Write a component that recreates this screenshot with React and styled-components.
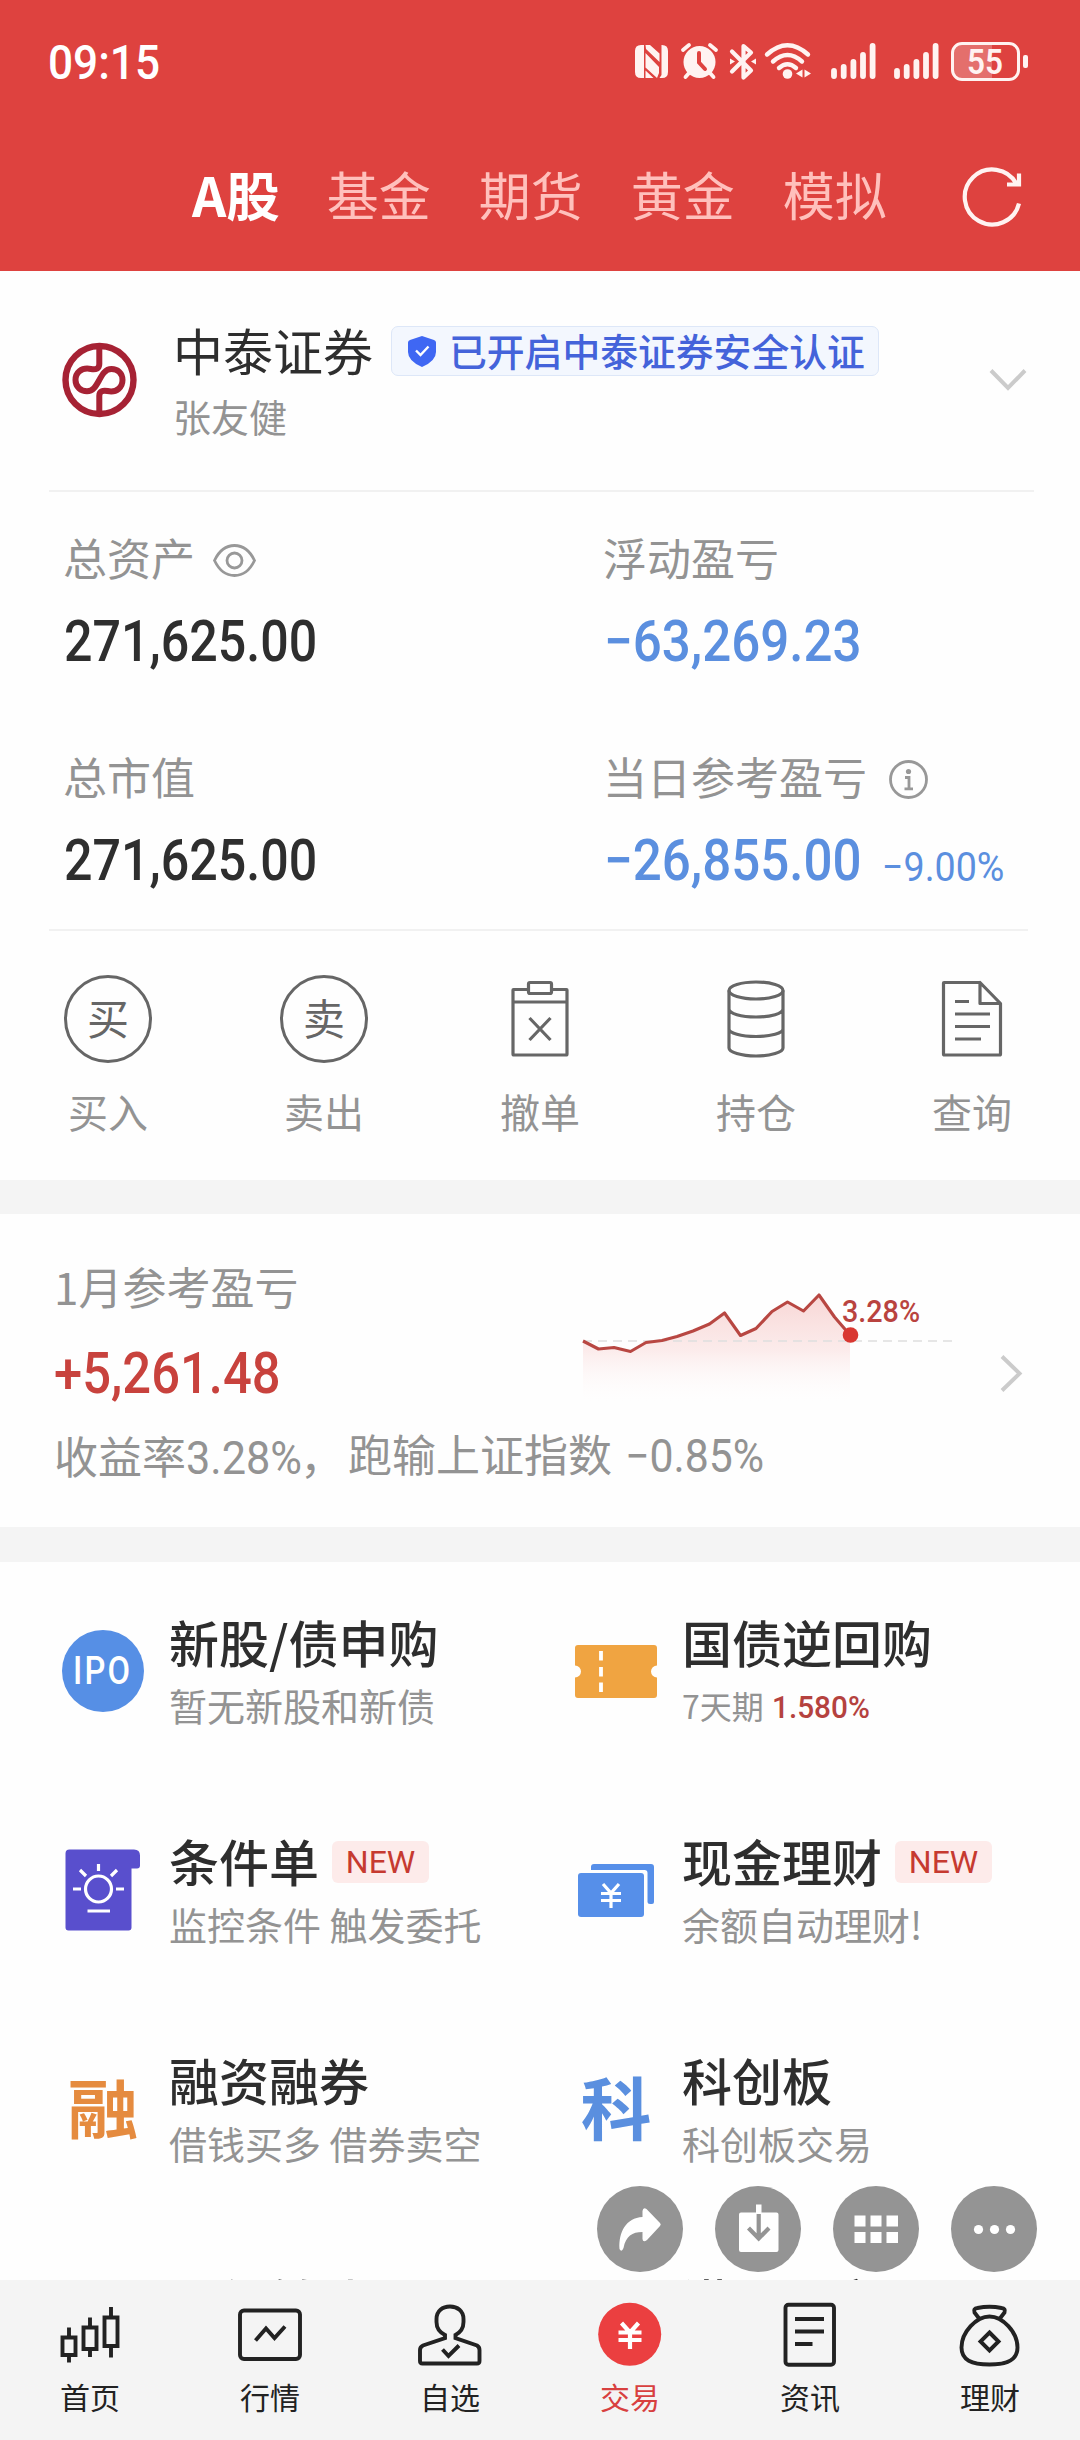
import React, { Fragment } from "react";
import styled, { createGlobalStyle } from "styled-components";

const Colors = {
  header: "#de423f",
  red: "#c8423d",
  blue: "#5b8fdf",
  text: "#2e2e2e",
  label: "#939393",
  icon: "#666666",
  line: "#f1f1f1",
  gap: "#f4f4f4",
};

const cjk = `"Noto Sans CJK SC", sans-serif`;
const latin = `Roboto, "Noto Sans CJK SC", sans-serif`;

const GlobalStyle = createGlobalStyle`
  * {
    box-sizing: border-box;
  }
  body {
    margin: 0;
    background-color: #fefefe;
    font-family: ${cjk};
  }
  svg {
    display: block;
    flex-shrink: 0;
    overflow: visible;
  }
`;

const Page = styled.div`
  position: relative;
  width: 1080px;
  height: 2440px;
  overflow: hidden;
  display: flex;
  flex-direction: column;
  background-color: #fefefe;
  white-space: nowrap;
`;

const Num = styled.span`
  display: inline-block;
  font-family: ${latin};
  font-size: ${(p) => p.$size}px;
  font-weight: ${(p) => p.$weight || 500};
  line-height: 1;
  color: ${(p) => p.$color || "inherit"};
  transform: scaleX(${(p) => p.$scale || 0.89});
  transform-origin: left center;
`;

/* ---------- header ---------- */

const Header = styled.header`
  height: 271px;
  flex-shrink: 0;
  background-color: ${Colors.header};
  color: #fff;
`;
const StatusBar = styled.div`
  height: 122px;
  padding: 0 52px 0 48px;
  display: flex;
  align-items: center;
  justify-content: space-between;
`;
const Clock = styled.div`
  padding-top: 3px;
  display: flex;
`;
const StatusIcons = styled.div`
  display: flex;
  align-items: center;
`;
const StatusIcon = styled.svg`
  margin-left: ${(p) => p.$gap || 0}px;
`;
const Battery = styled.div`
  width: 69px;
  height: 39px;
  margin-left: 12px;
  padding: 2px 0 0 3px;
  display: flex;
  align-items: center;
  justify-content: center;
  border: 3px solid #fff3f1;
  border-radius: 11px;
  background: linear-gradient(90deg, #e46f6c 60%, transparent 60%);
`;
const BatteryTip = styled.div`
  width: 5px;
  height: 13px;
  margin-left: 3px;
  border-radius: 2px;
  background-color: #fff3f1;
`;
const TabBar = styled.nav`
  height: 149px;
  padding: 0 58px 0 192px;
  display: flex;
  align-items: center;
`;
const Tab = styled.div`
  margin-right: ${(p) => (p.$active ? 47 : 48)}px;
  padding-bottom: 6px;
  font-size: ${(p) => (p.$active ? 53.5 : 52)}px;
  line-height: 60px;
  font-weight: ${(p) => (p.$active ? 700 : 400)};
  color: ${(p) => (p.$active ? "#fff" : "#ffc0bc")};
`;
const Refresh = styled.svg`
  margin-left: auto;
`;

/* ---------- account ---------- */

const Account = styled.section`
  height: 219px;
  flex-shrink: 0;
  padding: 55px 54px 0 62px;
  display: flex;
`;
const AccountLogo = styled.svg`
  margin-top: 17px;
`;
const AccountInfo = styled.div`
  margin-left: 37px;
  flex: 1;
`;
const AccountTitle = styled.div`
  height: 50px;
  display: flex;
  align-items: center;
`;
const BrokerName = styled.div`
  width: 218px;
  padding-bottom: 5px;
  font-size: 50px;
  line-height: 50px;
  color: ${Colors.text};
`;
const SafeBadge = styled.div`
  width: 488px;
  height: 50px;
  padding: 0 0 0 16px;
  display: flex;
  align-items: center;
  gap: 13px;
  border: 1px solid #dde7f8;
  border-radius: 7px;
  background-color: #f3f7fe;
  color: #4463da;
  font-size: 37.8px;
  font-weight: 500;
  line-height: 44px;
`;
const BadgeText = styled.span`
  padding-bottom: 2px;
`;
const UserName = styled.div`
  margin-top: 18px;
  font-size: 38px;
  line-height: 44px;
  color: ${Colors.label};
`;
const AccountArrow = styled.svg`
  margin-top: 42px;
`;
const Divider = styled.div`
  height: 2px;
  flex-shrink: 0;
  margin: 0 ${(p) => p.$right}px 0 49px;
  background-color: ${Colors.line};
`;

/* ---------- assets ---------- */

const Assets = styled.section`
  height: 437px;
  flex-shrink: 0;
  padding: 35px 0 0 63px;
  display: grid;
  grid-template-columns: 540px 1fr;
  grid-auto-rows: 145px;
  row-gap: 74px;
`;
const AssetLabel = styled.div`
  height: 60px;
  display: flex;
  align-items: center;
  font-size: 44px;
  line-height: 60px;
  color: ${Colors.label};
`;
const LabelIcon = styled.svg`
  margin: 6px 0 0 ${(p) => p.$gap}px;
`;
const AssetValue = styled.div`
  height: 60px;
  margin: 24px 0 0 1px;
  display: flex;
  align-items: center;
  color: ${(p) => (p.$down ? Colors.blue : Colors.text)};
`;
const AssetRate = styled.div`
  height: 40px;
  margin: 15px 0 0 -9px;
`;

/* ---------- actions ---------- */

const Actions = styled.section`
  height: 249px;
  flex-shrink: 0;
  padding-top: 44px;
  display: grid;
  grid-template-columns: repeat(5, 216px);
`;
const Action = styled.div`
  display: flex;
  flex-direction: column;
  align-items: center;
`;
const ActionCircle = styled.div`
  width: 88px;
  height: 88px;
  padding-bottom: 5px;
  display: flex;
  align-items: center;
  justify-content: center;
  border: 3px solid ${Colors.icon};
  border-radius: 50%;
  font-size: 42px;
  line-height: 42px;
  color: ${Colors.icon};
`;
const ActionLabel = styled.div`
  margin-top: 20px;
  font-size: 40px;
  line-height: 56px;
  color: ${Colors.label};
`;
const Gap = styled.div`
  height: ${(p) => p.$height}px;
  flex-shrink: 0;
  background-color: ${Colors.gap};
`;

/* ---------- month profit ---------- */

const Month = styled.section`
  height: 313px;
  flex-shrink: 0;
  padding: 44px 58px 0 54px;
  color: ${Colors.label};
`;
const MonthTop = styled.div`
  height: 145px;
  display: flex;
`;
const MonthText = styled.div`
  width: 529px;
`;
const MonthLabel = styled.div`
  font-size: 44px;
  line-height: 56px;
`;
const MonthValue = styled.div`
  height: 60px;
  margin-top: 29px;
  display: flex;
  align-items: center;
`;
const Chart = styled.svg`
  margin-top: -1px;
`;
const MonthArrow = styled.svg`
  margin: 97px 0 0 auto;
`;
const MonthSummary = styled.div`
  margin-top: 22px;
  display: flex;
  font-size: 44px;
  line-height: 56px;
`;
const SummaryPart = styled.div`
  width: ${(p) => p.$width}px;
  height: 56px;
  padding-top: ${(p) => p.$drop || 0}px;
  display: flex;
  align-items: center;
`;
const SummaryNum = styled.span`
  width: ${(p) => p.$width}px;
  margin-left: ${(p) => p.$gap || 0}px;
  padding-top: 5px;
  display: flex;
`;

/* ---------- features ---------- */

const Features = styled.section`
  height: 718px;
  flex-shrink: 0;
  overflow: hidden;
  display: grid;
  grid-template-columns: 513px 567px;
  grid-auto-rows: 219px;
`;
const Feature = styled.div`
  padding: ${(p) => (p.$last ? 53 : 51)}px 0 0 62px;
  display: flex;
  gap: 25px;
`;
const FeatureIcon = styled.div`
  width: 82px;
  height: 82px;
  margin-top: 17px;
  display: flex;
  align-items: center;
  justify-content: center;
`;
const IpoIcon = styled.div`
  width: 82px;
  height: 82px;
  padding-left: 8px;
  display: flex;
  align-items: center;
  justify-content: center;
  border-radius: 50%;
  background-color: #568fe5;
  color: #fff;
  letter-spacing: 2.5px;
`;
const WordIcon = styled.div`
  padding-bottom: 7px;
  font-size: 68px;
  line-height: 68px;
  font-weight: 700;
  color: ${(p) => p.$color};
  transform: scale(1.04, ${(p) => p.$scale || 1});
`;
const FeatureTitle = styled.div`
  height: 56px;
  display: flex;
  align-items: center;
  font-size: 50px;
  font-weight: 500;
  line-height: 56px;
  color: ${Colors.text};
`;
const NewTag = styled.div`
  width: 97px;
  height: 42px;
  margin: 3px 0 0 13px;
  display: flex;
  align-items: center;
  justify-content: center;
  border-radius: 6px;
  background-color: #fdebea;
  color: #c63a30;
  font-family: ${latin};
  font-size: 32px;
  font-weight: 400;
`;
const FeatureNote = styled.div`
  margin-top: 12px;
  display: flex;
  align-items: center;
  font-size: ${(p) => (p.$small ? 32 : 38)}px;
  line-height: 48px;
  color: ${Colors.label};
`;
const NoteRate = styled.span`
  margin: 4px 0 0 8px;
  display: flex;
`;

/* ---------- floating buttons ---------- */

const FloatBar = styled.div`
  position: absolute;
  top: 2186px;
  right: 43px;
  display: flex;
  gap: 32px;
`;
const FloatButton = styled.div`
  width: 86px;
  height: 86px;
  border-radius: 50%;
  background-color: #949494;
`;

/* ---------- bottom navigation ---------- */

const BottomNav = styled.nav`
  height: 160px;
  flex-shrink: 0;
  padding-top: 22px;
  display: grid;
  grid-template-columns: repeat(6, 180px);
  background-color: ${Colors.gap};
`;
const NavItem = styled.div`
  display: flex;
  flex-direction: column;
  align-items: center;
  font-size: 30px;
  line-height: 40px;
  color: ${(p) => (p.$active ? "#d8403f" : "#222")};
`;
const NavLabel = styled.div`
  margin-top: 9px;
`;

const Signal = ({ gap }) => (
  <StatusIcon $gap={gap} width="45" height="36" viewBox="0 0 45 36" fill="none">
    <path
      d="M3 28V33M12.7 24V33M22.4 19V33M32 12V33M41.6 3V33"
      stroke="#fff3f1"
      strokeWidth="5.8"
      strokeLinecap="round"
    />
  </StatusIcon>
);

const StatusRow = () => (
  <StatusBar>
    <Clock>
      <Num $size={48} $weight={500} $scale={0.92}>
        09:15
      </Num>
    </Clock>
    <StatusIcons>
      <StatusIcon width="33" height="33" viewBox="0 0 33 33">
        <path
          d="M6 0H9V33H6Q0 33 0 27V6Q0 0 6 0ZM10.500 0H15L24.500 8.500V17L11 4ZM26.500 0H27Q33 0 33 6V27Q33 33 27 33H24.500L26.500 30ZM10.500 8L24 22V28L22 33L10.500 22.500ZM10.500 25.500L18.500 33H10.500Z"
          fill="#fff3f1"
        />
      </StatusIcon>
      <StatusIcon $gap={13} width="37" height="36" viewBox="0 0 37 36" fill="none">
        <circle cx="18.500" cy="19" r="16" fill="#fff3f1" />
        <path
          d="M2 7L8 2M35 7L29 2M8 30L4.500 34M29 30L32.500 34"
          stroke="#fff3f1"
          strokeWidth="3.800"
          strokeLinecap="round"
        />
        <path
          d="M18 10V19.500L24 26"
          stroke={Colors.header}
          strokeWidth="4"
          strokeLinecap="round"
        />
      </StatusIcon>
      <StatusIcon $gap={12} width="26" height="37" viewBox="0 0 26 37" fill="none">
        <path
          d="M2 8.500L21 27.500L13.500 34.500V3L21 9.500L2 28.500"
          stroke="#fff3f1"
          strokeWidth="4.200"
          strokeLinecap="round"
          strokeLinejoin="round"
        />
        <path d="M0 15.500L5 18.500L0 21.500ZM26 15.500L21 18.500L26 21.500Z" fill="#fff3f1" />
      </StatusIcon>
      <StatusIcon $gap={9} width="46" height="36" viewBox="0 0 46 36" fill="none">
        <path
          d="M2 11.500Q22.500 -7 43 11.500M8 18.500Q22.500 5.500 37 18.500M14 25Q22.500 17.500 31 25"
          stroke="#fff3f1"
          strokeWidth="4.400"
          strokeLinecap="round"
        />
        <circle cx="22.500" cy="31" r="4.800" fill="#fff3f1" />
        <path
          d="M37.500 26.500V34.500L31 30.500ZM39.500 26.500V34.500L46 30.500Z"
          fill="#fff3f1"
        />
      </StatusIcon>
      <Signal gap={20} />
      <Signal gap={18} />
      <Battery>
        <Num $size={35} $weight={600} $scale={0.9} $color="#fff3f1">
          55
        </Num>
      </Battery>
      <BatteryTip />
    </StatusIcons>
  </StatusBar>
);

const Tabs = ["A股", "基金", "期货", "黄金", "模拟"];

const points = [
  [0, 56], [15.5, 64], [31, 62.5], [47.500, 66.500], [63, 57.500], [79, 55.500],
  [94, 51.500], [110, 46], [126.500, 39], [141.500, 28], [157.500, 50.500],
  [173, 43.500], [189, 26.500], [204.500, 17], [220.500, 26], [236, 10],
  [251.500, 32], [267, 50],
];

const ProfitChart = () => {
  const line = points.map((p) => p.join(",")).join(" ");
  return (
    <Chart width="370" height="130" viewBox="0 -28 370 130">
      <defs>
        <linearGradient
          id="profitFill"
          gradientUnits="userSpaceOnUse"
          x1="0"
          y1="10"
          x2="0"
          y2="120"
        >
          <stop offset="0" stopColor="#f4bcba" stopOpacity="0.6" />
          <stop offset="0.5" stopColor="#f8d4d3" stopOpacity="0.45" />
          <stop offset="1" stopColor="#ffffff" stopOpacity="0" />
        </linearGradient>
      </defs>
      <polygon points={`${line} 267,130 0,130`} fill="url(#profitFill)" />
      <path
        d="M0 56H370"
        stroke="#dedede"
        strokeWidth="1.5"
        strokeDasharray="9 6"
      />
      <polyline
        points={line}
        fill="none"
        stroke="#b84742"
        strokeWidth="3.1"
        strokeLinejoin="round"
      />
      <circle cx="267.5" cy="50" r="7.8" fill="#d93832" />
      <text
        x="259"
        y="37"
        fontFamily="Roboto, sans-serif"
        fontSize="31"
        fontWeight="500"
        textLength="78"
        lengthAdjust="spacingAndGlyphs"
        fill="#b9433f"
      >
        3.28%
      </text>
    </Chart>
  );
};

const CancelIcon = () => (
  <svg width="88" height="88" viewBox="0 0 88 88" fill="none" stroke={Colors.icon} strokeWidth="3.200">
    <path d="M32 14.500H17.500Q17 14.500 17 15V79Q17 80 18 80H70Q71 80 71 79V15Q71 14.500 70.500 14.500H56M17 27H71" />
    <rect x="32.500" y="7.500" width="23" height="11" rx="1.500" />
    <path d="M33.500 43L54.500 65M54.500 43L33.500 65" />
  </svg>
);

const HoldIcon = () => (
  <svg width="88" height="88" viewBox="0 0 88 88" fill="none" stroke={Colors.icon} strokeWidth="3.200">
    <ellipse cx="44" cy="15.500" rx="27" ry="8.500" />
    <path d="M17 15.500V73C17 77 29 81 44 81S71 77 71 73V15.500M17 34C17 38.500 29 42 44 42S71 38.500 71 34M17 54C17 58 29 61.500 44 61.500S71 58 71 54" />
  </svg>
);

const QueryIcon = () => (
  <svg width="88" height="88" viewBox="0 0 88 88" fill="none" stroke={Colors.icon} strokeWidth="3.200">
    <path d="M52 7.500H16Q15.500 7.500 15.500 8V79Q15.500 80 16.500 80H71.500Q72.500 80 72.500 79V28.500L52 7.500V28.500H72.500" strokeLinejoin="round" />
    <path d="M27 26.500H41M27 39H62M27 51.500H62M27 64H53" />
  </svg>
);

const actions = [
  { label: "买入", icon: <ActionCircle>买</ActionCircle> },
  { label: "卖出", icon: <ActionCircle>卖</ActionCircle> },
  { label: "撤单", icon: <CancelIcon /> },
  { label: "持仓", icon: <HoldIcon /> },
  { label: "查询", icon: <QueryIcon /> },
];

const TicketIcon = () => (
  <svg width="82" height="82" viewBox="0 0 82 82">
    <path
      d="M3 15H79Q82 15 82 18V35.500A6 6 0 0 0 82 47.500V65Q82 68 79 68H3Q0 68 0 65V47.500A6 6 0 0 0 0 35.500V18Q0 15 3 15Z"
      fill="#f0a441"
    />
    <path d="M26 21V30.500M26 37V46.500M26 52.500V62" stroke="#fff" strokeWidth="3.800" />
  </svg>
);

const ConditionIcon = () => (
  <svg width="82" height="82" viewBox="0 0 82 82" fill="none">
    <path
      d="M7.500 0.500H72Q78 0.500 78 6.500V16.500Q78 19.500 75 19.500H69.500V78.500Q69.500 81.500 66.500 81.500H6.500Q3.500 81.500 3.500 78.500V4.500Q3.500 0.500 7.500 0.500Z"
      fill="#594fcd"
    />
    <circle cx="36.500" cy="40" r="13" stroke="#fff" strokeWidth="3.200" />
    <path
      d="M36.500 15V22M11 40H19M54 40H62M18 21L24 27M55 21L49 27M25.500 62H48"
      stroke="#fff"
      strokeWidth="3.200"
    />
  </svg>
);

const CashIcon = () => (
  <svg width="82" height="82" viewBox="0 0 82 82">
    <path
      d="M16 21V18Q16 15 19 15H76Q79 15 79 18V53Q79 55 77 55H75Q72.500 55 72.500 53V24Q72.500 21 69.500 21Z"
      fill="#568fe9"
    />
    <rect x="3" y="24" width="66" height="44" rx="3" fill="#568fe9" />
    <path
      d="M28 35L36 44L44 35M26 44.500H46M26 51.500H46M36 44V59"
      fill="none"
      stroke="#fff"
      strokeWidth="3.200"
    />
  </svg>
);

const features = [
  {
    title: "新股/债申购",
    note: "暂无新股和新债",
    icon: (
      <IpoIcon>
        <Num $size={38} $scale={0.86}>
          IPO
        </Num>
      </IpoIcon>
    ),
  },
  { title: "国债逆回购", note: "7天期", rate: "1.580%", icon: <TicketIcon /> },
  { title: "条件单", note: "监控条件 触发委托", isNew: true, icon: <ConditionIcon /> },
  { title: "现金理财", note: "余额自动理财!", isNew: true, icon: <CashIcon /> },
  {
    title: "融资融券",
    note: "借钱买多 借券卖空",
    icon: (
      <WordIcon $color="#e58b3f" $scale={0.94}>
        融
      </WordIcon>
    ),
  },
  {
    title: "科创板",
    note: "科创板交易",
    icon: <WordIcon $color="#5a8fdf">科</WordIcon>,
  },
  { title: "股份转让", last: true },
  { title: "港股通交易", last: true },
];

const Yuan = ({ width }) => (
  <path
    d="M23.500 21L32 30.500L40.500 21M20.500 30.500H43.500M20.500 38H43.500M32 30V47"
    stroke="#fff"
    strokeWidth={width}
  />
);

const navItems = [
  {
    label: "首页",
    icon: (
      <path d="M4.500 35.500H17.500V53H4.500ZM11 25.500V35.500M11 53V60.500M25.500 25.500H38.500V47H25.500ZM32 15.500V25.500M32 47V55M46.500 15.500H59.500V44H46.500ZM53 5V15.500M53 44V55.500" />
    ),
  },
  {
    label: "行情",
    icon: (
      <Fragment>
        <rect x="2" y="8.500" width="60" height="48.500" rx="4" />
        <path d="M17.500 38.500L28 26.500L36.500 36L47 24.500" />
      </Fragment>
    ),
  },
  {
    label: "自选",
    icon: (
      <Fragment>
        <path d="M27 33C21 30 18.500 26 18.500 20V17C18.500 9 24.500 4.500 32 4.500S45.500 9 45.500 17V20C45.500 26 43 30 37.500 33V36L59 43.500Q61.500 45 61.500 48V59Q61.500 61.500 59 61.500H4.500Q2 61.500 2 59V48Q2 45 5 43.500L27 36Z" />
        <path d="M24.500 47.500L30.500 54L41 43.500" />
      </Fragment>
    ),
  },
  {
    label: "交易",
    active: true,
    icon: (
      <Fragment>
        <circle cx="31.700" cy="32.300" r="31.500" fill="#eb3f40" stroke="none" />
        <Yuan width={4.2} />
      </Fragment>
    ),
  },
  {
    label: "资讯",
    icon: (
      <Fragment>
        <rect x="7.500" y="2.800" width="48.500" height="60" rx="3" />
        <path d="M17 17H46M17 29.500H46M17 42H34.500" />
      </Fragment>
    ),
  },
  {
    label: "理财",
    icon: (
      <Fragment>
        <path d="M21.500 17L16.500 10.500Q15 6.500 19.500 6Q31.500 3.500 43.500 6Q48 6.500 46.500 10.500L41.500 17" />
        <path d="M31.500 14.500C44.500 14.500 59.500 30 59.500 45.500C59.500 58 49.500 62.500 31.500 62.500S3.500 58 3.500 45.500C3.500 30 18.500 14.500 31.500 14.500Z" />
        <path d="M31.500 30.500L40.500 39.500L31.500 48.500L22.500 39.500Z" />
      </Fragment>
    ),
  },
];

const floatIcons = [
  <path d="M45.500 31V25Q46 21 49.500 23L63 37Q64.500 38.500 63 40L50 54Q46 57 45.500 53V46C35 46 29 50 26.500 62Q24.500 67 22.500 63C21.500 46 29 32 45.500 31Z" />,
  <Fragment>
    <path d="M26 26.500H41V18.500H46.500V26.500H61.500Q63.500 26.500 63.500 28.500V64Q63.500 66 61.500 66H26Q24 66 24 64V28.500Q24 26.500 26 26.500Z" />
    <path d="M43.700 28V52M33.500 42L43.700 52.500L54 42" fill="none" stroke="#949494" strokeWidth="4.200" />
  </Fragment>,
  <path d="M21.500 29.500H32.500V40.500H21.500ZM37.500 29.500H48.500V40.500H37.500ZM53.500 29.500H65V40.500H53.500ZM21.500 46H32.500V57H21.500ZM37.500 46H48.500V57H37.500ZM53.500 46H65V57H53.500Z" />,
  <Fragment>
    <circle cx="27.500" cy="43.500" r="4.600" />
    <circle cx="43.500" cy="43.500" r="4.600" />
    <circle cx="59.500" cy="43.500" r="4.600" />
  </Fragment>,
];

const App = () => {
  return (
    <Page>
      <GlobalStyle />
      <Header>
        <StatusRow />
        <TabBar>
          {Tabs.map((tab, index) => (
            <Tab $active={index === 0} key={tab}>
              {tab}
            </Tab>
          ))}
          <Refresh width="60" height="60" viewBox="0 0 60 60" fill="none" stroke="#fff3f1" strokeWidth="4.200">
            <path d="M57 36.500A27.500 27.500 0 1 1 54.500 17" />
            <path d="M57 6.500V17.500H45" />
          </Refresh>
        </TabBar>
      </Header>

      <Account>
        <AccountLogo width="74" height="74" viewBox="0 0 74 74" fill="none" stroke="#a62234">
          <circle cx="37.500" cy="37" r="34" strokeWidth="6.400" />
          <path
            d="M37.300 4V21C37.300 25.500 34 27 29 26C19 24 13.500 30 13.500 37C13.500 44 19 48.300 25 48.300C31 48.300 34 43 37 37.500C40 32 43 26 49.500 26C55.500 26 60.500 30 60.500 37C60.500 44 55 50 45.500 48C40.500 47 37.300 48.500 37.300 53V70"
            strokeWidth="6"
          />
        </AccountLogo>
        <AccountInfo>
          <AccountTitle>
            <BrokerName>中泰证券</BrokerName>
            <SafeBadge>
              <svg width="28" height="31" viewBox="0 0 28 31">
                <path
                  d="M14 0L26 4Q28 4.500 28 6.500V16Q28 25 14 31Q0 25 0 16V6.500Q0 4.500 2 4Z"
                  fill="#3f67f3"
                />
                <path d="M8 14.500L12.500 19L20.500 10.500" fill="none" stroke="#fff" strokeWidth="2.400" />
              </svg>
              <BadgeText>已开启中泰证券安全认证</BadgeText>
            </SafeBadge>
          </AccountTitle>
          <UserName>张友健</UserName>
        </AccountInfo>
        <AccountArrow width="36" height="24" viewBox="0 0 36 24" fill="none">
          <path d="M1 2.500L18 20L35 2.500" stroke="#cbcbcb" strokeWidth="4" />
        </AccountArrow>
      </Account>
      <Divider $right={46} />

      <Assets>
        <div>
          <AssetLabel>
            总资产
            <LabelIcon $gap={18} width="43" height="33" viewBox="0 0 43 33" fill="none" stroke="#989898" strokeWidth="2.800">
              <path d="M1.500 16.500C6 7 13 1.500 21.500 1.500S37 7 41.500 16.500C37 26 30 31.500 21.500 31.500S6 26 1.500 16.500Z" />
              <circle cx="21.500" cy="16.500" r="7.500" />
            </LabelIcon>
          </AssetLabel>
          <AssetValue>
            <Num $size={57} $scale={0.88}>
              271,625.00
            </Num>
          </AssetValue>
        </div>
        <div>
          <AssetLabel>浮动盈亏</AssetLabel>
          <AssetValue $down>
            <Num $size={57} $scale={0.896}>
              −63,269.23
            </Num>
          </AssetValue>
        </div>
        <div>
          <AssetLabel>总市值</AssetLabel>
          <AssetValue>
            <Num $size={57} $scale={0.88}>
              271,625.00
            </Num>
          </AssetValue>
        </div>
        <div>
          <AssetLabel>
            当日参考盈亏
            <LabelIcon $gap={22} width="39" height="39" viewBox="0 0 39 39" fill="none" stroke="#989898" strokeWidth="2.800">
              <circle cx="19.500" cy="19.500" r="18" />
              <circle cx="19.500" cy="11.500" r="2.600" fill="#989898" stroke="none" />
              <path d="M16 17.500H20V28.500M15.500 28.800H24" />
            </LabelIcon>
          </AssetLabel>
          <AssetValue $down>
            <Num $size={57} $scale={0.896}>
              −26,855.00
            </Num>
            <AssetRate>
              <Num $size={40} $weight={400} $scale={0.94}>
                −9.00%
              </Num>
            </AssetRate>
          </AssetValue>
        </div>
      </Assets>
      <Divider $right={52} />

      <Actions>
        {actions.map((action) => (
          <Action key={action.label}>
            {action.icon}
            <ActionLabel>{action.label}</ActionLabel>
          </Action>
        ))}
      </Actions>
      <Gap $height={34} />

      <Month>
        <MonthTop>
          <MonthText>
            <MonthLabel>1月参考盈亏</MonthLabel>
            <MonthValue>
              <Num $size={57} $color={Colors.red}>
                +5,261.48
              </Num>
            </MonthValue>
          </MonthText>
          <ProfitChart />
          <MonthArrow width="22" height="37" viewBox="0 0 22 37" fill="none">
            <path d="M2 1.500L19.500 18.500L2 35.500" stroke="#cbcbcb" strokeWidth="4" />
          </MonthArrow>
        </MonthTop>
        <MonthSummary>
          <SummaryPart $width={294} $drop={4}>
            收益率
            <SummaryNum $width={114}>
              <Num $size={46} $weight={400} $scale={0.94}>
                3.28%
              </Num>
            </SummaryNum>
            ，
          </SummaryPart>
          <SummaryPart $width={440}>
            跑输上证指数
            <SummaryNum $width={140} $gap={13}>
              <Num $size={46} $weight={400} $scale={0.93}>
                −0.85%
              </Num>
            </SummaryNum>
          </SummaryPart>
        </MonthSummary>
      </Month>
      <Gap $height={35} />

      <Features>
        {features.map((item) => (
          <Feature key={item.title} $last={item.last}>
            <FeatureIcon>{item.icon}</FeatureIcon>
            <div>
              <FeatureTitle>
                {item.title}
                {item.isNew && <NewTag>NEW</NewTag>}
              </FeatureTitle>
              <FeatureNote $small={!!item.rate}>
                {item.note}
                {item.rate && (
                  <NoteRate>
                    <Num $size={32} $scale={0.93} $color="#b5423f">
                      {item.rate}
                    </Num>
                  </NoteRate>
                )}
              </FeatureNote>
            </div>
          </Feature>
        ))}
      </Features>

      <BottomNav>
        {navItems.map((item) => (
          <NavItem $active={item.active} key={item.label}>
            <svg width="64" height="65" viewBox="0 0 64 65" fill="none" stroke="#222" strokeWidth="3.900">
              {item.icon}
            </svg>
            <NavLabel>{item.label}</NavLabel>
          </NavItem>
        ))}
      </BottomNav>

      <FloatBar>
        {floatIcons.map((icon, index) => (
          <FloatButton key={index}>
            <svg width="86" height="86" viewBox="0 0 86 86" fill="#fff">
              {icon}
            </svg>
          </FloatButton>
        ))}
      </FloatBar>
    </Page>
  );
};

export default App;
